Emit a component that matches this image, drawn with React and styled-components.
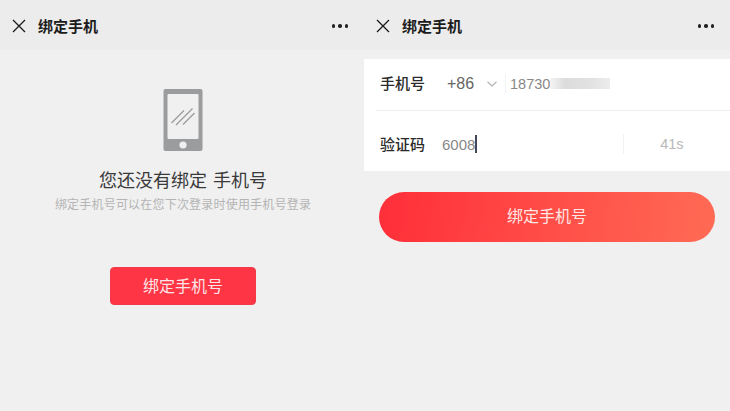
import React from 'react';
import styled, { createGlobalStyle } from 'styled-components';

const GlobalStyle = createGlobalStyle`
  html, body {
    margin: 0;
    padding: 0;
    background: #f0f0f0;
  }
  body {
    font-family: "Liberation Sans", "Noto Sans CJK SC", sans-serif;
  }
`;

const CloseIcon = () => (
  <svg width="14" height="14" viewBox="0 0 14 14">
    <path d="M1 1l12 12M13 1L1 13" stroke="#1a1a1a" strokeWidth="1.3" fill="none" />
  </svg>
);

const PhoneIcon = () => (
  <svg width="40" height="62" viewBox="0 0 40 62">
    <rect x="0.5" y="0" width="39" height="62" rx="2" fill="#9a9c9e" />
    <rect x="4.5" y="5" width="31" height="45" rx="1" fill="#f0f0f0" />
    <circle cx="20" cy="56" r="3.6" fill="#f0f0f0" />
    <path d="M8.5 34L21 21.5M13 36L29.5 19.5M20 35.5L31.5 24" stroke="#9a9c9e" strokeWidth="1.3" fill="none" />
  </svg>
);

const Chevron = () => (
  <svg width="10" height="6" viewBox="0 0 10 6">
    <path d="M0.5 0.7L5 5L9.5 0.7" stroke="#b9b9b9" strokeWidth="1.4" fill="none" />
  </svg>
);

const Header = () => (
  <TopBar>
    <CloseIcon />
    <Title>绑定手机</Title>
    <Dots>
      <Dot />
      <Dot />
      <Dot />
    </Dots>
  </TopBar>
);

export default function App() {
  return (
    <Page>
      <GlobalStyle />
      <Panel>
        <Header />
        <Empty>
          <PhoneIcon />
          <Heading>您还没有绑定 手机号</Heading>
          <Hint>绑定手机号可以在您下次登录时使用手机号登录</Hint>
          <BindButton>绑定手机号</BindButton>
        </Empty>
      </Panel>
      <Panel>
        <Header />
        <Card>
          <PhoneRow>
            <Label>手机号</Label>
            <Code>+86</Code>
            <Chevron />
            <PhoneNumber>
              18730
              <Blur />
            </PhoneNumber>
          </PhoneRow>
          <VerifyRow>
            <Label>验证码</Label>
            <Input>6008</Input>
            <Caret />
            <Countdown>41s</Countdown>
          </VerifyRow>
        </Card>
        <GradientButton>绑定手机号</GradientButton>
      </Panel>
    </Page>
  );
}

const Page = styled.div`
  display: grid;
  grid-template-columns: 364px 366px;
  width: 730px;
  height: 411px;
  overflow: hidden;
  background: #f0f0f0;
`;

const Panel = styled.div`
  display: flex;
  flex-direction: column;
  min-width: 0;
`;

const TopBar = styled.div`
  display: flex;
  align-items: center;
  box-sizing: border-box;
  height: 50px;
  padding: 2px 16px 0 12px;
  background: #ececec;
`;

const Title = styled.div`
  margin: -2px 0 0 12px;
  font-size: 15px;
  font-weight: 700;
  color: #1c1c1c;
`;

const Dots = styled.div`
  display: flex;
  gap: 3px;
  margin-left: auto;
`;

const Dot = styled.span`
  width: 3.5px;
  height: 3.5px;
  border-radius: 50%;
  background: #222;
`;

const Empty = styled.div`
  display: flex;
  flex-direction: column;
  align-items: center;
  padding: 39px 0 0 2px;
`;

const Heading = styled.div`
  margin-top: 18px;
  font-size: 18px;
  line-height: 24px;
  word-spacing: 1px;
  color: #3a3a3a;
`;

const Hint = styled.div`
  margin-top: 3px;
  font-size: 12px;
  line-height: 18px;
  letter-spacing: 0.2px;
  color: #b4b4b4;
`;

const BindButton = styled.div`
  display: flex;
  align-items: center;
  justify-content: center;
  box-sizing: border-box;
  width: 146px;
  height: 38px;
  margin-top: 53px;
  padding-bottom: 2px;
  border: 1px solid #f23a48;
  border-radius: 4px;
  background: #fd3545;
  font-size: 16px;
  color: #fde4e6;
`;

const Card = styled.div`
  margin-top: 9px;
  background: #fff;
`;

const PhoneRow = styled.div`
  display: flex;
  align-items: center;
  box-sizing: border-box;
  height: 52px;
  margin-left: 12px;
  padding: 0 0 2px 4px;
  border-bottom: 1px solid #eeeeee;
`;

const VerifyRow = styled.div`
  display: flex;
  align-items: center;
  box-sizing: border-box;
  height: 60px;
  margin-left: 12px;
  padding: 6px 0 0 4px;
`;

const Label = styled.div`
  width: 62px;
  padding-bottom: 2px;
  font-size: 15px;
  font-weight: 500;
  color: #2a2a2a;
  flex: none;
`;

const Code = styled.div`
  width: 40px;
  margin-left: 5px;
  font-size: 16px;
  color: #666;
`;

const PhoneNumber = styled.div`
  display: flex;
  align-items: center;
  height: 20px;
  margin-left: 8px;
  padding-left: 4px;
  border-left: 1px solid #f2f2f2;
  font-size: 14.5px;
  color: #888;
`;

const Blur = styled.span`
  width: 60px;
  height: 11px;
  background: linear-gradient(90deg, #f4f4f4 0%, #dcdcdc 25%, #e2e2e2 70%, #ececec 100%);
`;

const Input = styled.div`
  font-size: 15px;
  color: #888;
`;

const Caret = styled.span`
  width: 1.5px;
  height: 18px;
  background: #44465a;
`;

const Countdown = styled.div`
  display: flex;
  align-items: center;
  justify-content: center;
  box-sizing: border-box;
  width: 93px;
  height: 20px;
  margin-left: 146px;
  padding-left: 4px;
  border-left: 1px solid #f2f2f2;
  font-size: 14.5px;
  color: #b8b8b8;
`;

const GradientButton = styled.div`
  display: flex;
  align-items: center;
  justify-content: center;
  align-self: flex-start;
  box-sizing: border-box;
  width: 336px;
  height: 50px;
  margin: 21px 0 0 15px;
  padding-bottom: 5px;
  border-radius: 25px;
  background: linear-gradient(100deg, #ff2e39 0%, #ff6b55 100%);
  font-size: 16px;
  color: #ffe6e3;
`;
